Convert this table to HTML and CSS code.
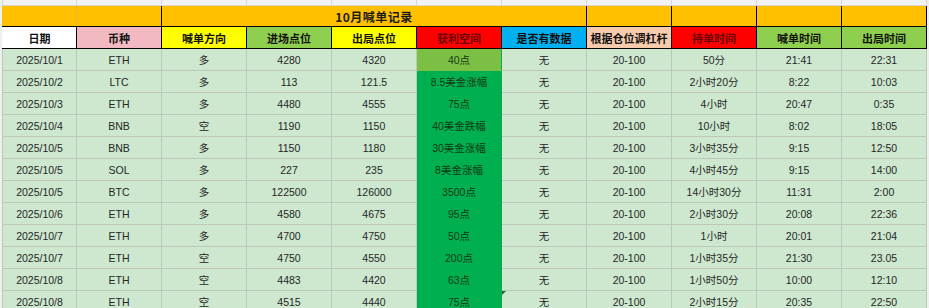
FILE: index.html
```html
<!DOCTYPE html>
<html lang="zh">
<head>
<meta charset="utf-8">
<title>10月喊单记录</title>
<link rel="stylesheet" href="styles.css">
</head>
<body>
<table class="sheet">
  <colgroup>
    <col class="w-date"><col class="w"><col class="w"><col class="w"><col class="w"><col class="w"><col class="w"><col class="w"><col class="w"><col class="w"><col class="w">
  </colgroup>
  <tr class="strip"><td></td><td></td><td></td><td></td><td></td><td></td><td></td><td></td><td></td><td></td><td></td></tr>
  <tr class="band">
    <td class="b-first"></td><td class="b-second"></td><td colspan="5" class="title">10月喊单记录</td><td></td><td></td><td></td><td></td>
  </tr>
  <tr class="heads">
    <td class="h-white">日期</td>
    <td class="h-pink">币种</td>
    <td class="h-yellow">喊单方向</td>
    <td class="h-lime">进场点位</td>
    <td class="h-yellow">出局点位</td>
    <td class="h-red">获利空间</td>
    <td class="h-blue">是否有数据</td>
    <td class="h-peach">根据仓位调杠杆</td>
    <td class="h-red">持单时间</td>
    <td class="h-lime">喊单时间</td>
    <td class="h-lime">出局时间</td>
  </tr>
  <tr><td>2025/10/1</td><td>ETH</td><td>多</td><td>4280</td><td>4320</td><td class="p p-first">40点</td><td>无</td><td>20-100</td><td>50分</td><td>21:41</td><td>22:31</td></tr>
  <tr><td>2025/10/2</td><td>LTC</td><td>多</td><td>113</td><td>121.5</td><td class="p">8.5美金涨幅</td><td>无</td><td>20-100</td><td>2小时20分</td><td>8:22</td><td>10:03</td></tr>
  <tr><td>2025/10/3</td><td>ETH</td><td>多</td><td>4480</td><td>4555</td><td class="p">75点</td><td>无</td><td>20-100</td><td>4小时</td><td>20:47</td><td>0:35</td></tr>
  <tr><td>2025/10/4</td><td>BNB</td><td>空</td><td>1190</td><td>1150</td><td class="p">40美金跌幅</td><td>无</td><td>20-100</td><td>10小时</td><td>8:02</td><td>18:05</td></tr>
  <tr><td>2025/10/5</td><td>BNB</td><td>多</td><td>1150</td><td>1180</td><td class="p">30美金涨幅</td><td>无</td><td>20-100</td><td>3小时35分</td><td>9:15</td><td>12:50</td></tr>
  <tr><td>2025/10/5</td><td>SOL</td><td>多</td><td>227</td><td>235</td><td class="p">8美金涨幅</td><td>无</td><td>20-100</td><td>4小时45分</td><td>9:15</td><td>14:00</td></tr>
  <tr><td>2025/10/5</td><td>BTC</td><td>多</td><td>122500</td><td>126000</td><td class="p">3500点</td><td>无</td><td>20-100</td><td>14小时30分</td><td>11:31</td><td>2:00</td></tr>
  <tr><td>2025/10/6</td><td>ETH</td><td>多</td><td>4580</td><td>4675</td><td class="p">95点</td><td>无</td><td>20-100</td><td>2小时30分</td><td>20:08</td><td>22:36</td></tr>
  <tr><td>2025/10/7</td><td>ETH</td><td>多</td><td>4700</td><td>4750</td><td class="p">50点</td><td>无</td><td>20-100</td><td>1小时</td><td>20:01</td><td>21:04</td></tr>
  <tr><td>2025/10/7</td><td>ETH</td><td>空</td><td>4750</td><td>4550</td><td class="p">200点</td><td>无</td><td>20-100</td><td>1小时35分</td><td>21:30</td><td>23.05</td></tr>
  <tr><td>2025/10/8</td><td>ETH</td><td>空</td><td>4483</td><td>4420</td><td class="p">63点</td><td>无</td><td>20-100</td><td>1小时50分</td><td>10:00</td><td>12:10</td></tr>
  <tr><td>2025/10/8</td><td>ETH</td><td>空</td><td>4515</td><td>4440</td><td class="p">75点</td><td class="flag">无</td><td>20-100</td><td>2小时15分</td><td>20:35</td><td>22:50</td></tr>
</table>
</body>
</html>
```

FILE: styles.css
```css
html, body {
  margin: 0;
  padding: 0;
  background: #eef0ee;
  overflow: hidden;
}

body {
  padding-left: 2px;
}

.sheet {
  border-collapse: collapse;
  table-layout: fixed;
  width: 924px;
  font-family: "Liberation Sans", "Noto Sans CJK SC", sans-serif;
  font-size: 10.5px;
  color: #262626;
}

.w-date { width: 74px; }
.w { width: 85px; }

.sheet td {
  height: 22px;
  padding: 2px 0 0 0;
  box-sizing: border-box;
  text-align: center;
  vertical-align: middle;
  white-space: nowrap;
  overflow: hidden;
  background: #cde8cf;
  border: 1px solid #bcc8b9;
  line-height: 18px;
}

.sheet tr.strip td {
  height: 5px;
  padding: 0;
  line-height: 4px;
  background: #f3f3f3;
  border-color: #d6d6d6;
  border-top: 0;
}

.sheet tr.band td {
  background: #ffc000;
  border: 1px solid #000;
  border-top-color: #d6d6d6;
  height: 21px;
  padding-top: 1px;
  line-height: 19px;
}

.sheet tr.band td.b-first {
  border-left-color: #ffc000;
  border-right-color: #e8b34a;
}

.sheet tr.band td.b-second {
  border-left-color: #e8b34a;
}

.sheet tr.band td.title {
  font-family: "Noto Sans CJK SC", sans-serif;
  font-weight: bold;
  font-size: 12px;
  letter-spacing: 0.5px;
  color: #1a1a1a;
}

.sheet tr.heads td {
  border: 1px solid #000;
  font-family: "Noto Sans CJK SC", sans-serif;
  font-weight: bold;
  font-size: 11px;
  color: #111;
  height: 22px;
  padding-top: 1px;
  line-height: 20px;
}

.sheet tr.heads td:first-child { border-left-color: #ffffff; }

.h-white { background: #ffffff !important; }
.h-pink { background: #f3b9c1 !important; }
.h-yellow { background: #ffff00 !important; }
.h-lime { background: #8fcf4f !important; }
.sheet tr.heads td.h-red { background: #ff0000; color: #6a0000; }
.h-blue { background: #00b0f0 !important; }
.h-peach { background: #f8cbad !important; }

.sheet td.p {
  background: #00b050;
  border-left-color: #00b050;
  border-right-color: #00b050;
  border-top-color: #00b050;
  border-bottom-color: #00b050;
  color: #143a14;
}

.sheet td.p-first {
  background: #7cbf45;
  border-top-color: #000;
  border-bottom-color: #7cbf45;
}

.sheet td.flag {
  position: relative;
}

.sheet td.flag::before {
  content: "";
  position: absolute;
  left: 0;
  top: 0;
  border-style: solid;
  border-width: 4px 4px 0 0;
  border-color: #1e6b30 transparent transparent transparent;
}
```
